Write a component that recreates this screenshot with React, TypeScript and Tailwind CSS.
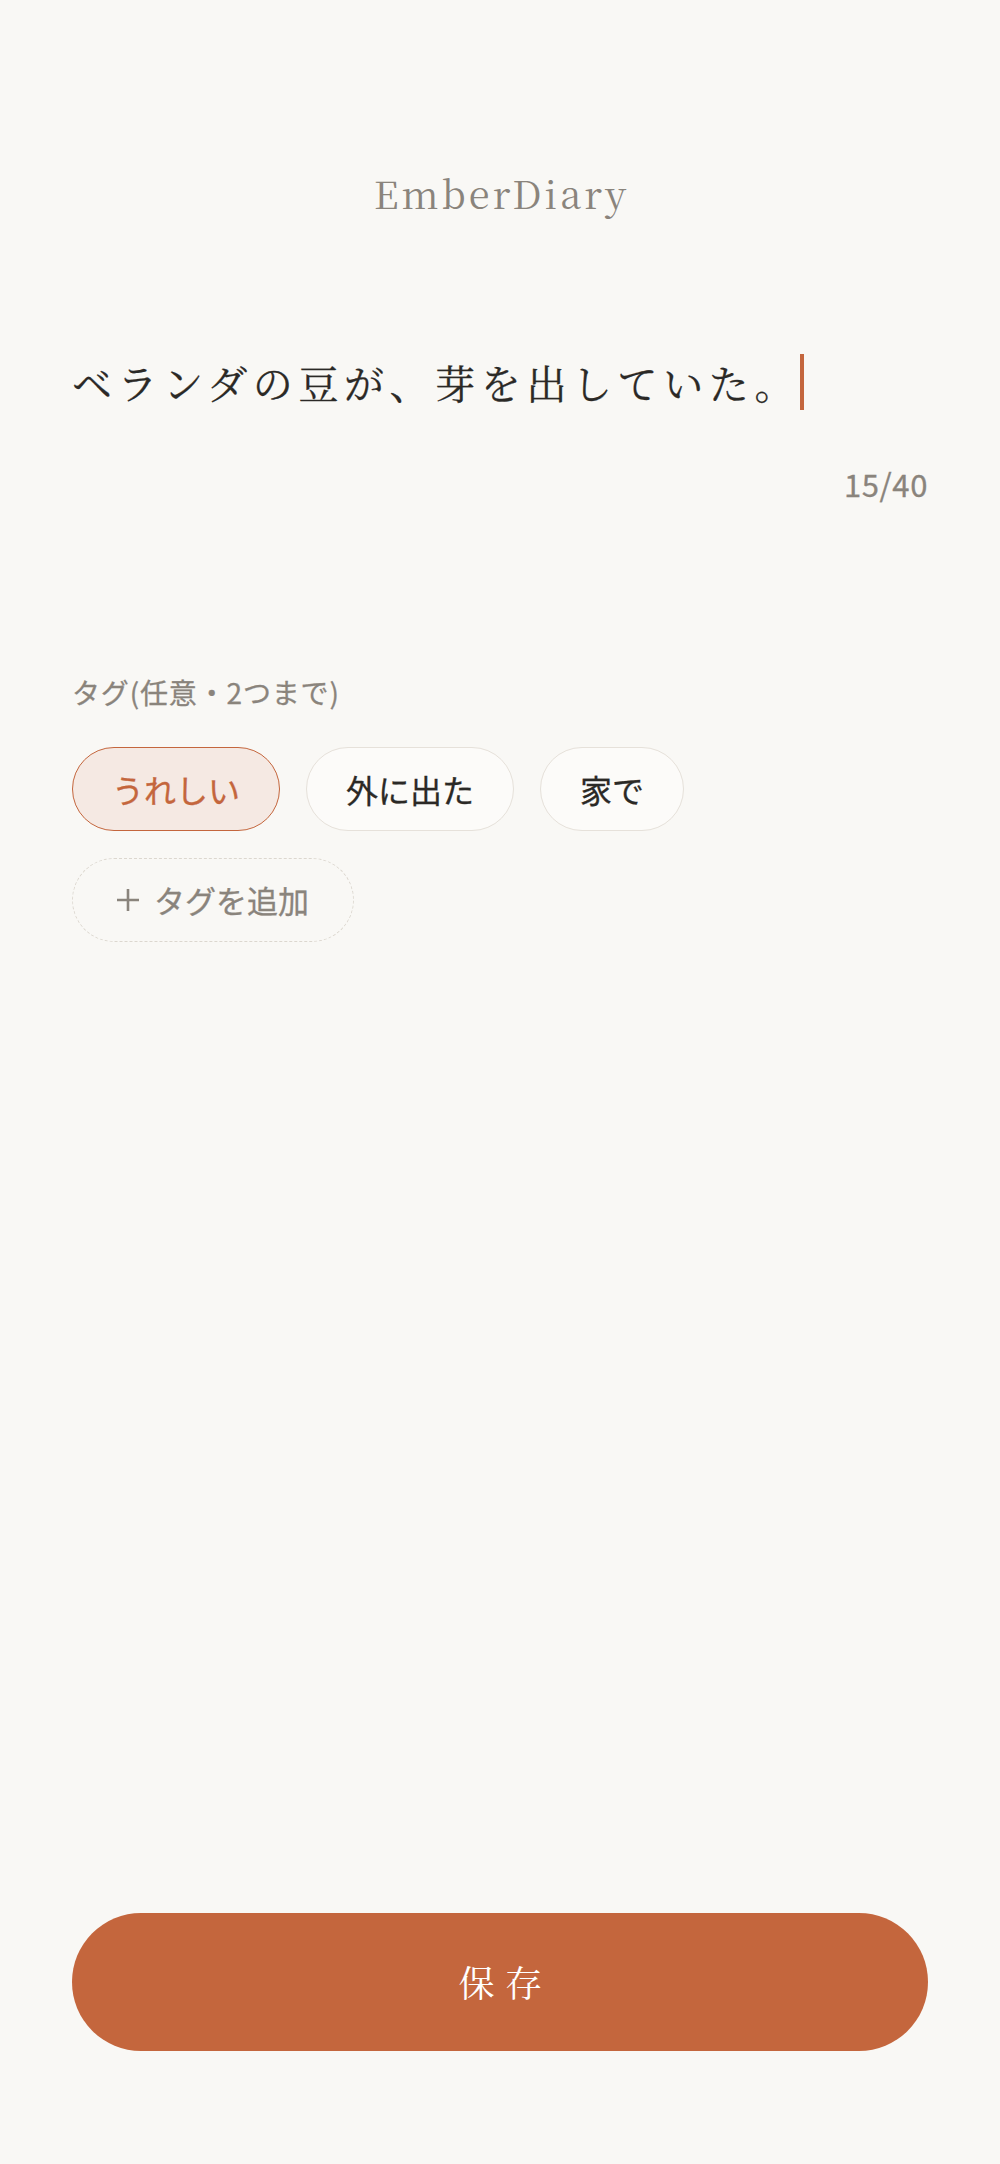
import { useState } from 'react';

const serif = "font-['Noto_Serif_CJK_JP','Liberation_Serif','Noto_Sans_CJK_JP',serif]";
const sans = "font-['Noto_Sans_CJK_JP','Noto_Sans',sans-serif]";

const TAGS = ['うれしい', '外に出た', '家で'];

function PlusIcon() {
  return (
    <svg
      width="22"
      height="22"
      viewBox="0 0 22 22"
      fill="none"
      stroke="currentColor"
      strokeWidth="2.6"
      aria-hidden="true"
    >
      <path d="M11 0v22M0 11h22" />
    </svg>
  );
}

export default function App() {
  const [selected, setSelected] = useState<string[]>(['うれしい']);
  const text = 'ベランダの豆が、芽を出していた。';

  const toggle = (tag: string) => {
    setSelected((current) =>
      current.includes(tag)
        ? current.filter((item) => item !== tag)
        : current.length < 2
          ? [...current, tag]
          : current,
    );
  };

  return (
    <div
      className={`flex min-h-screen flex-col bg-[#f9f8f5] px-[72px] pb-[113px] ${sans}`}
    >
      <header className="pt-[169px] text-center">
        <h1
          className={`${serif} pl-[0.08em] text-[38px] leading-[48px] tracking-[0.08em] text-[#8a847c]`}
        >
          EmberDiary
        </h1>
      </header>

      <div className="mt-[137px] flex items-center">
        <p
          className={`${serif} text-[40px] leading-[56px] tracking-[0.14em] text-[#2b2926] [-webkit-text-stroke:0.3px_#2b2926]`}
        >
          {text}
        </p>
        <span className="h-[56px] w-[4px] bg-[#c4663d]" aria-hidden="true" />
      </div>

      <p className="mt-[51px] text-right text-[31px] leading-[45px] tracking-[0.02em] text-[#8a847c] [-webkit-text-stroke:0.3px_#8a847c]">
        15/40
      </p>

      <p className="mt-[166px] text-[28px] leading-[40px] tracking-[0.03em] text-[#8a847c] [-webkit-text-stroke:0.3px_#8a847c]">
        タグ(任意・2つまで)
      </p>

      <div className="mt-[35px] flex flex-wrap gap-x-[26px] gap-y-[27px]">
        {TAGS.map((tag) => {
          const active = selected.includes(tag);
          return (
            <button
              key={tag}
              type="button"
              onClick={() => toggle(tag)}
              className={
                active
                  ? 'flex h-[84px] items-center rounded-full border-[1.5px] border-[#c4663d] bg-[#f5e9e3] px-[39px] text-[32px] text-[#c4663d] [-webkit-text-stroke:0.3px_#c4663d]'
                  : 'flex h-[84px] items-center rounded-full border-[1.5px] border-[#e6e1da] bg-[#fcfbf9] px-[39px] text-[32px] text-[#2b2926] [-webkit-text-stroke:0.3px_#2b2926]'
              }
            >
              {tag}
            </button>
          );
        })}
        <button
          type="button"
          className="flex h-[84px] items-center gap-[15px] rounded-full border-[1.5px] border-dashed border-[#dcd7cf] pl-[44px] pr-[44px] text-[31px] text-[#8a847c] [-webkit-text-stroke:0.3px_#8a847c]"
        >
          <PlusIcon />
          タグを追加
        </button>
      </div>

      <button
        type="button"
        className={`${serif} mt-auto flex h-[138px] w-full items-center justify-center rounded-full bg-[#c4663d] pl-[0.3em] text-[36px] tracking-[0.3em] text-white`}
      >
        保存
      </button>
    </div>
  );
}
